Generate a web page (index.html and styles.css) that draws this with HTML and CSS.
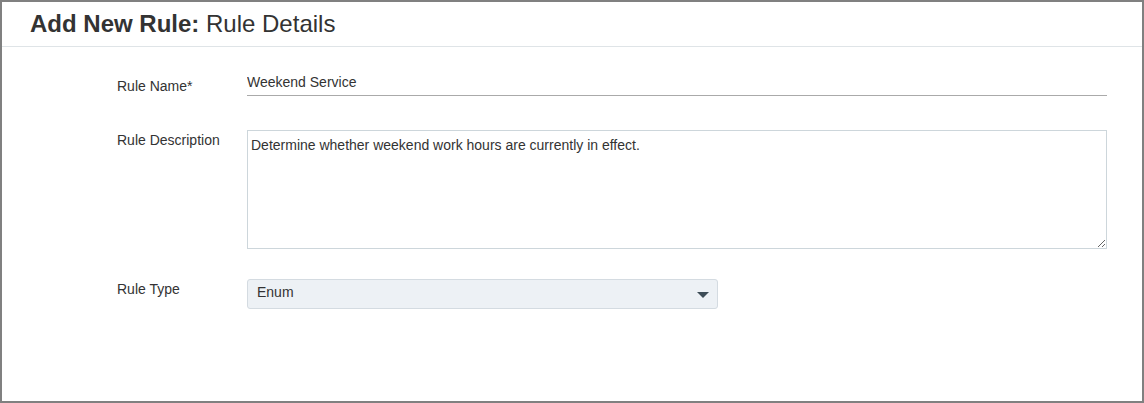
FILE: index.html
```html
<!DOCTYPE html>
<html>
<head>
<meta charset="utf-8">
<link rel="stylesheet" href="styles.css">
</head>
<body>
<div class="panel">
  <div class="header">
    <h1 class="title"><b>Add New Rule:</b> Rule Details</h1>
  </div>
  <form class="form">
    <label class="label label-name" for="rn">Rule Name*</label>
    <input id="rn" class="text-input" type="text" value="Weekend Service">

    <label class="label label-desc" for="rd">Rule Description</label>
    <textarea id="rd" class="textarea">Determine whether weekend work hours are currently in effect.</textarea>

    <label class="label label-type">Rule Type</label>
    <div class="select">
      <span class="select-value">Enum</span>
      <span class="caret"></span>
    </div>
  </form>
</div>
</body>
</html>
```
FILE: styles.css
```css
html, body {
  margin: 0;
  padding: 0;
  background: #fff;
}
body {
  font-family: "Liberation Sans", Arial, sans-serif;
  color: #333;
}
.panel {
  box-sizing: border-box;
  width: 1144px;
  height: 403px;
  border: 2px solid #808080;
  background: #fff;
}
.header {
  padding: 7px 28px;
  border-bottom: 1px solid #dfe4e7;
}
.title {
  margin: 0;
  font-size: 24px;
  line-height: 30px;
  font-weight: normal;
  color: #333;
}
.title b {
  font-weight: bold;
}
.form {
  display: grid;
  grid-template-columns: 130px 860px;
  padding: 23px 0 0 115px;
}
.label {
  font-size: 14px;
  line-height: 20px;
  color: #333;
}
.label-name { margin-top: 6px; }
.label-desc { margin-top: 0; }
.label-type { margin-top: 0; }
.text-input {
  box-sizing: border-box;
  width: 860px;
  height: 26px;
  margin: 0 0 34px 0;
  padding: 0 0 2px 0;
  border: none;
  border-bottom: 1px solid #aaaaaa;
  font-family: inherit;
  font-size: 14px;
  color: #333;
  outline: none;
  background: transparent;
}
.textarea {
  box-sizing: border-box;
  width: 860px;
  height: 119px;
  margin: 0 0 30px 0;
  padding: 6px 3px;
  border: 1px solid #cdd6db;
  font-family: inherit;
  font-size: 14px;
  line-height: 16px;
  color: #333;
  outline: none;
  display: block;
}
.select {
  box-sizing: border-box;
  width: 471px;
  height: 30px;
  border: 1px solid #d4dbe1;
  border-radius: 3px;
  background: #edf1f5;
  display: flex;
  align-items: center;
  justify-content: space-between;
  padding: 0 8px 0 9px;
}
.select-value {
  font-size: 14px;
  line-height: 16px;
  color: #333;
  padding-bottom: 4px;
}
.caret {
  width: 0;
  height: 0;
  border-left: 6px solid transparent;
  border-right: 6px solid transparent;
  border-top: 6px solid #3d4d57;
  margin-top: 1px;
}
```
